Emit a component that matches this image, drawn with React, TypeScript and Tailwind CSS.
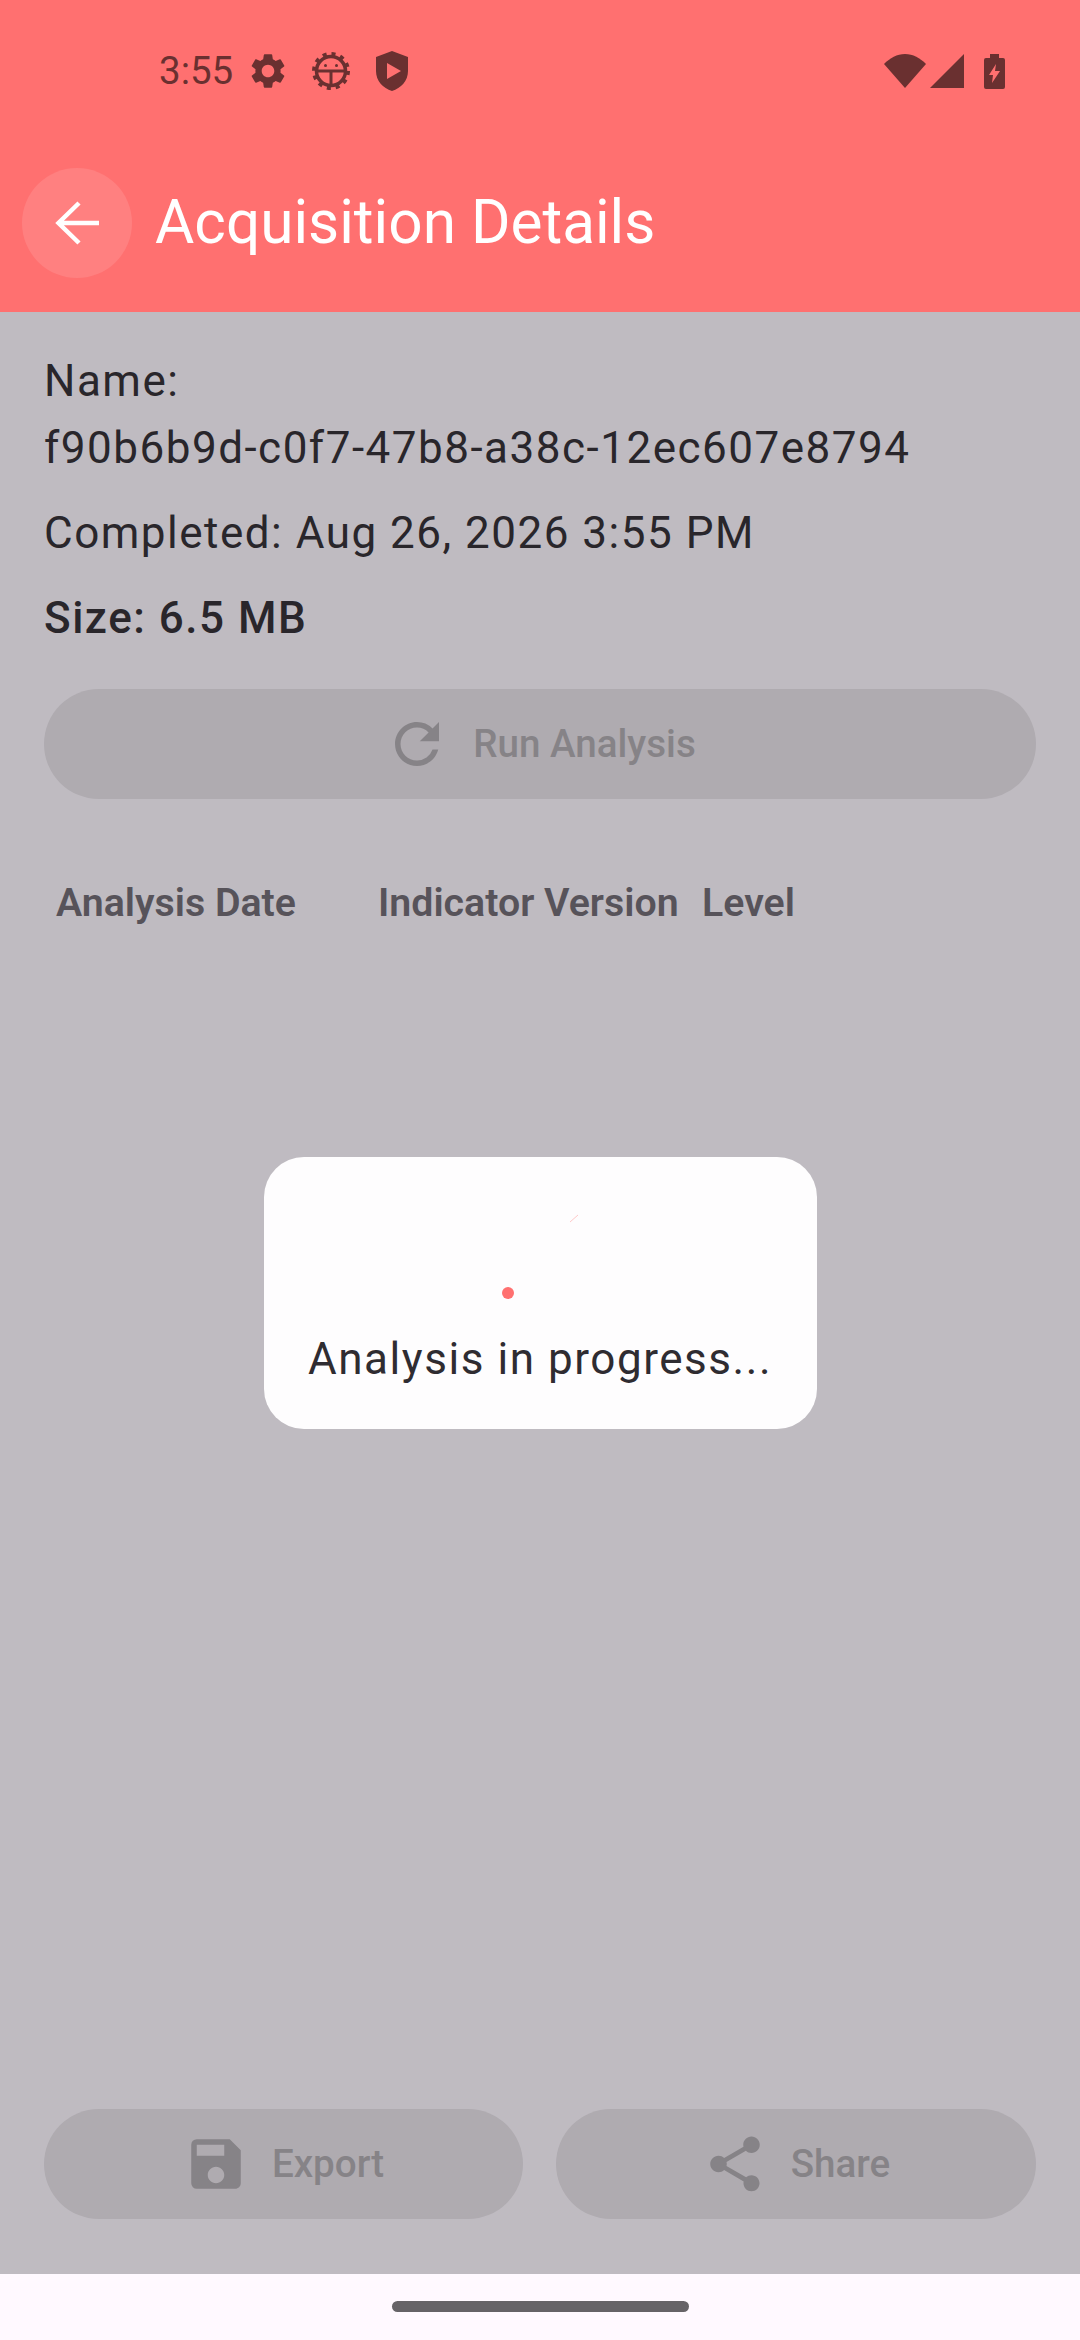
import { MdRefresh, MdSave, MdSettings, MdShare } from 'react-icons/md'

const bodyFont = 'font-["Roboto",sans-serif]'

function BugGearIcon() {
  return (
    <svg viewBox="0 0 40 40" className="h-[40px] w-[40px]">
      <circle cx="20" cy="20" r="14.5" fill="none" stroke="#6a3030" strokeWidth="3.5" />
      <circle cx="20" cy="20" r="17" fill="none" stroke="#6a3030" strokeWidth="4" strokeDasharray="4 4.9" />
      <path d="M6 20h28M20 20v13" stroke="#6a3030" strokeWidth="3" />
      <circle cx="14.5" cy="14.5" r="1.5" fill="#6a3030" />
      <circle cx="25.5" cy="14.5" r="1.5" fill="#6a3030" />
    </svg>
  )
}

function ShieldPlayIcon() {
  return (
    <svg viewBox="0 0 32 40" className="h-[40px] w-[32px]">
      <path
        fillRule="evenodd"
        fill="#6a3030"
        d="M16 0 32 6v14c0 10-7 17-16 20C7 37 0 30 0 20V6ZM11 12v16l14-8Z"
      />
    </svg>
  )
}

function WifiIcon() {
  return (
    <svg viewBox="0 0 42 34" className="h-[34px] w-[42px]">
      <path fill="#6a3030" d="M21 34 0 10C6 4 13 0 21 0s15 4 21 10Z" />
    </svg>
  )
}

function SignalIcon() {
  return (
    <svg viewBox="0 0 34 34" className="h-[34px] w-[34px]">
      <path fill="#6a3030" d="M34 0v34H0Z" />
    </svg>
  )
}

function BatteryIcon() {
  return (
    <svg viewBox="0 0 21 35" className="h-[35px] w-[21px]">
      <path
        fillRule="evenodd"
        fill="#6a3030"
        d="M6 0h9v4h4a2 2 0 0 1 2 2v27a2 2 0 0 1-2 2H2a2 2 0 0 1-2-2V6a2 2 0 0 1 2-2h4ZM12 10 5 21h4l-1 8 8-12h-5Z"
      />
    </svg>
  )
}

function ActionButton({ label, icon, className }: { label: string; icon: React.ReactNode; className: string }) {
  return (
    <div className={`flex h-[110px] items-center justify-center gap-[23px] rounded-full bg-[#afabb0] text-[#868387] ${className}`}>
      {icon}
      <span className="text-[38.6px] font-medium">{label}</span>
    </div>
  )
}

export default function App() {
  return (
    <div className={`flex h-[2340px] w-[1080px] flex-col overflow-hidden bg-[#bfbbc1] ${bodyFont}`}>
      <header className="flex h-[312px] shrink-0 flex-col bg-[#ff7070]">
        <div className="flex h-[142px] shrink-0 items-center pl-[159px] pr-[75px] text-[#6a3030]">
          <span className="text-[38.5px] leading-none">3:55</span>
          <MdSettings className="ml-[14px] h-[42px] w-[42px]" />
          <span className="ml-[22px]"><BugGearIcon /></span>
          <span className="ml-[25px]"><ShieldPlayIcon /></span>
          <div className="ml-auto flex items-center">
            <WifiIcon />
            <span className="ml-[4px]"><SignalIcon /></span>
            <span className="ml-[20px]"><BatteryIcon /></span>
          </div>
        </div>
        <div className="mt-[26px] flex h-[110px] items-center pl-[22px]">
          <div className="flex h-[110px] w-[110px] items-center justify-center rounded-full bg-[#ff8080]">
            <svg viewBox="0 0 44 44" className="h-[44px] w-[44px]" fill="none" stroke="#ffffff" strokeWidth="4.5">
              <path d="M44 22H3M24 2 3.5 22 24 42" />
            </svg>
          </div>
          <h1 className="ml-[23px] text-[60.3px] font-normal leading-none text-white">Acquisition Details</h1>
        </div>
      </header>

      <main className="relative flex min-h-0 flex-1 flex-col px-[44px]">
        <div className="flex flex-col pt-[36px] text-[44px] tracking-[1.5px] text-[#29262b]">
          <p className="leading-[67px]">Name:<br />f90b6b9d-c0f7-47b8-a38c-12ec607e8794</p>
          <p className="mt-[18px] leading-[67px]">Completed: Aug 26, 2026 3:55 PM</p>
          <p className="mt-[18px] font-medium leading-[67px]">Size: 6.5 MB</p>
        </div>

        <ActionButton
          label="Run Analysis"
          className="mt-[37px] w-full"
          icon={<MdRefresh className="h-[66px] w-[66px]" />}
        />

        <div className="mt-[75px] flex pl-[12px] text-[39.3px] font-semibold text-[#57535a]">
          <span className="w-[322px]">Analysis Date</span>
          <span className="w-[324px]">Indicator Version</span>
          <span>Level</span>
        </div>

        <div className="mb-[55px] mt-auto flex justify-between">
          <ActionButton label="Export" className="w-[479px]" icon={<MdSave className="h-[66px] w-[66px]" />} />
          <ActionButton label="Share" className="w-[480px]" icon={<MdShare className="h-[66px] w-[66px]" />} />
        </div>

        <div className="absolute inset-0 flex items-center justify-center">
          <div className="flex h-[272px] w-[553px] flex-col items-center rounded-[40px] bg-[#fefdfe] pt-[39px]">
            <svg viewBox="0 0 112 112" className="h-[112px] w-[112px]">
              <circle cx="24" cy="97" r="6" fill="#ff7070" />
              <path d="M86 26 94 19" stroke="#ffc9c9" strokeWidth="1" />
            </svg>
            <p className="mt-[23px] text-[44px] leading-[56px] tracking-[1.55px] text-[#2f2c31]">Analysis in progress...</p>
          </div>
        </div>
      </main>

      <footer className="flex h-[66px] shrink-0 items-start justify-center bg-[#fff9ff] pt-[27px]">
        <div className="h-[11px] w-[297px] rounded-full bg-[#666367]" />
      </footer>
    </div>
  )
}
